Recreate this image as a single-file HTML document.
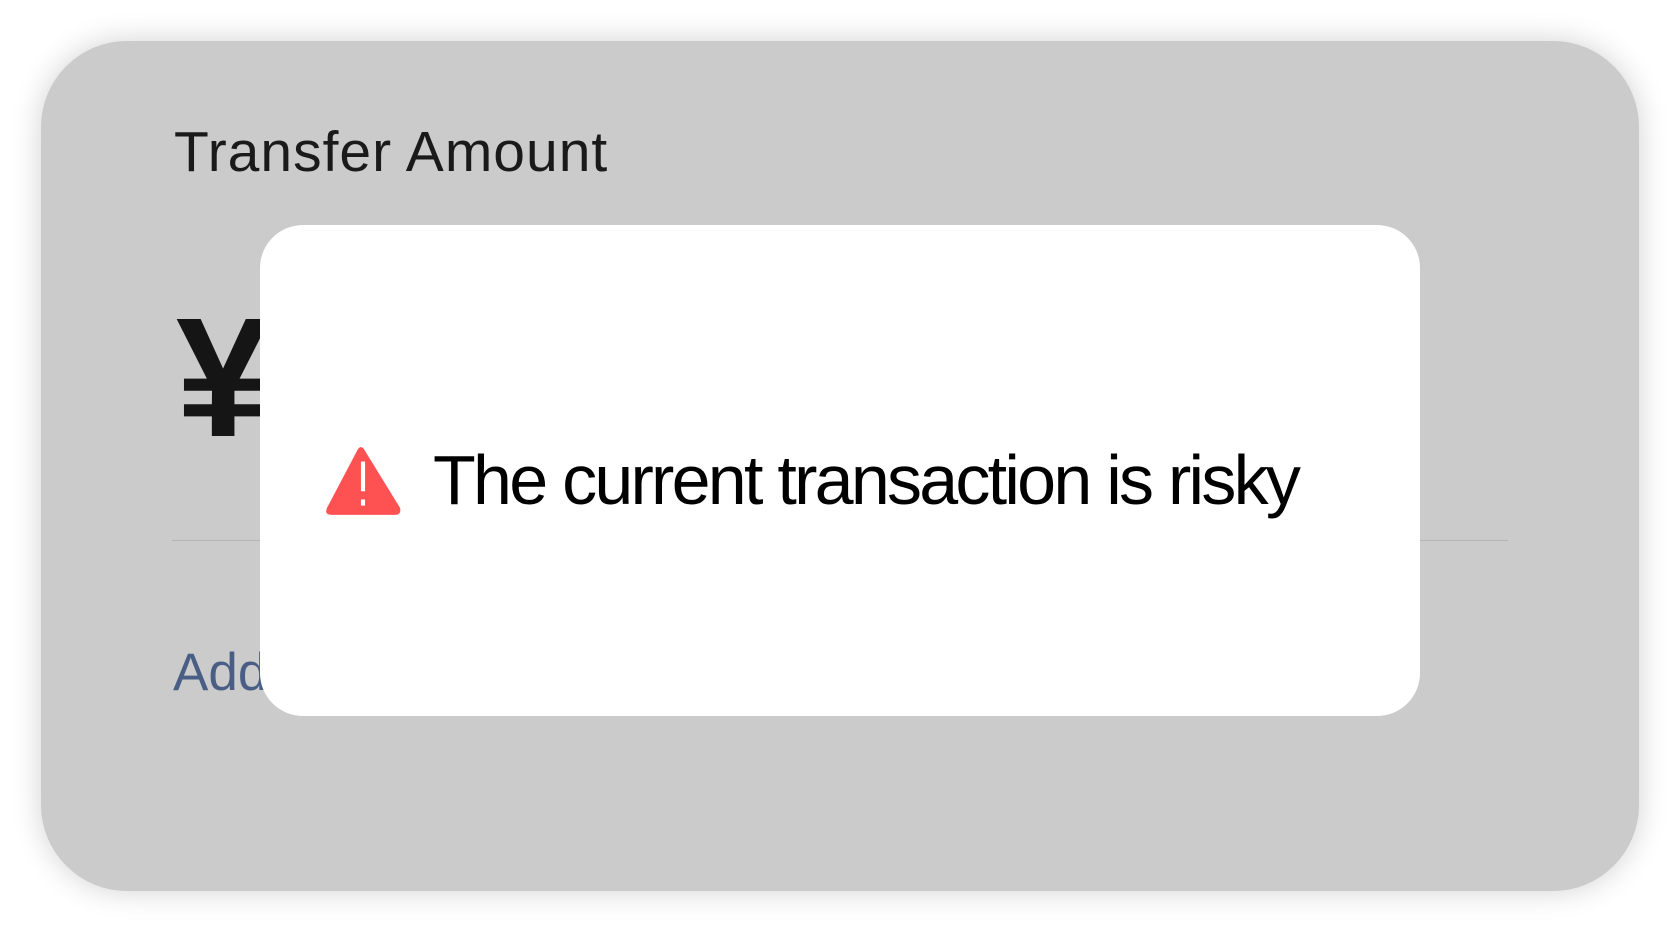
<!DOCTYPE html>
<html><head><style>
body{margin:0;width:1680px;height:932px;background:#fff;position:relative;overflow:hidden;font-family:"Liberation Sans",sans-serif}
.card{position:absolute;left:41px;top:41px;width:1598px;height:850px;background:#cbcbcb;border-radius:86px;box-shadow:0 0 30px rgba(0,0,0,0.18)}
.t{position:absolute;left:174px;top:119px;font-size:57px;color:#1a1a1a;white-space:nowrap;letter-spacing:1px}
.y{position:absolute;left:176px;top:293px;font-size:170px;font-weight:bold;color:#151515;line-height:1}
.line{position:absolute;left:172px;top:540px;width:1336px;height:1px;background:#b5b5b5}
.a{position:absolute;left:173px;top:642px;font-size:53px;color:#4a5e85}
.m{position:absolute;left:260px;top:225px;width:1160px;height:491px;background:#fff;border-radius:43px}
.mt{position:absolute;left:433px;top:440px;font-size:70px;color:#000;white-space:nowrap;letter-spacing:-2.75px;line-height:80px}
</style></head><body>
<div class="card"></div>
<div class="t">Transfer Amount</div>
<div class="y">¥</div>
<div class="line"></div>
<div class="a">Add</div>
<div class="m"></div>
<svg style="position:absolute;left:322px;top:444px" width="82" height="74" viewBox="0 0 80 72">
<path d="M35 5 Q38 1 41 5 L76 62 Q78 69 71 69 L9 69 Q2 69 5 62 Z" fill="#fe5252"/>
<rect x="38" y="17" width="4" height="29" fill="#fff"/>
<rect x="38" y="54" width="4" height="6" fill="#fff"/>
</svg>
<div class="mt">The current transaction is risky</div>
</body></html>
